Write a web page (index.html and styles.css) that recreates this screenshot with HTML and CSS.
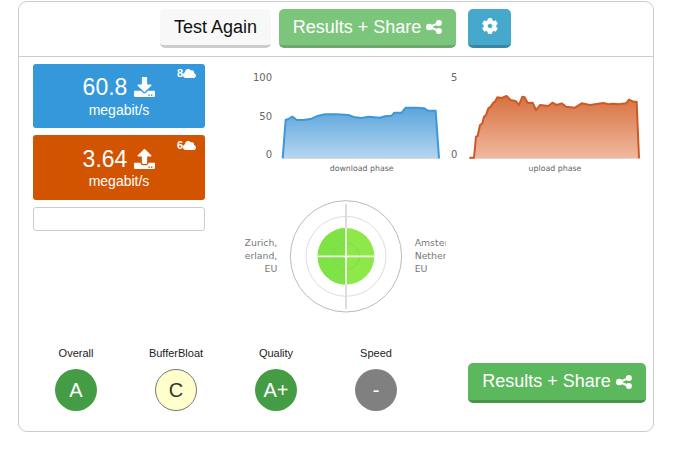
FILE: index.html
```html
<!DOCTYPE html>
<html lang="en">
<head>
<meta charset="utf-8">
<title>Speed test results</title>
<link rel="stylesheet" href="styles.css">
</head>
<body>
<svg class="defs" width="0" height="0" aria-hidden="true">
  <defs>
    <symbol id="i-share" viewBox="0 0 16 14"><circle cx="3.3" cy="7" r="3.3"/><circle cx="12.9" cy="3" r="3"/><circle cx="12.9" cy="11" r="3"/><path class="share-links" d="M12.9 3L3.3 7L12.9 11"/></symbol>
    <symbol id="i-cloud" viewBox="0 0 640 512"><path d="M537.6 226.6c4.1-10.7 6.4-22.4 6.4-34.6 0-53-43-96-96-96-19.7 0-38.1 6-53.3 16.2C367 64.2 315.3 32 256 32c-88.4 0-160 71.6-160 160 0 2.7.1 5.4.2 8.1C40.2 219.8 0 273.2 0 336c0 79.5 64.5 144 144 144h368c70.7 0 128-57.3 128-128 0-61.9-44-113.6-102.4-125.4z"/></symbol>
    <linearGradient id="g-down" x1="0" y1="0" x2="0" y2="1"><stop offset="0" stop-color="#5aa5dc"/><stop offset="1" stop-color="#b5d6ef"/></linearGradient>
    <linearGradient id="g-up" x1="0" y1="0" x2="0" y2="1"><stop offset="0" stop-color="#d8713f"/><stop offset="1" stop-color="#f0b9a0"/></linearGradient>
    <clipPath id="clip-left"><rect x="15" y="0" width="105" height="390"/></clipPath>
    <clipPath id="clip-right"><rect x="520" y="0" width="97" height="390"/></clipPath>
  </defs>
</svg>
<main class="panel">
  <header class="toolbar">
    <button class="btn btn-light">Test Again</button>
    <button class="btn btn-green btn-faded">Results + Share <svg class="ico-share"><use href="#i-share"/></svg></button>
    <button class="btn btn-gear" aria-label="Settings">
      <svg class="ico-cog" viewBox="0 0 512 512"><path d="M487.4 315.7l-42.6-24.6c4.3-23.2 4.3-47 0-70.2l42.6-24.6c4.9-2.8 7.1-8.6 5.5-14-11.1-35.6-30-67.8-54.7-94.6-3.8-4.1-10-5.1-14.8-2.3L380.8 110c-17.9-15.4-38.5-27.3-60.8-35.1V25.8c0-5.6-3.9-10.5-9.4-11.7-36.7-8.2-74.3-7.8-109.2 0-5.5 1.2-9.4 6.1-9.4 11.7V75c-22.2 7.9-42.8 19.8-60.8 35.1L88.7 85.5c-4.9-2.8-11-1.9-14.8 2.3-24.7 26.7-43.6 58.9-54.7 94.6-1.7 5.4.6 11.2 5.5 14L67.3 221c-4.3 23.2-4.3 47 0 70.2l-42.6 24.6c-4.9 2.8-7.1 8.6-5.5 14 11.1 35.6 30 67.8 54.7 94.6 3.8 4.1 10 5.1 14.8 2.3l42.6-24.6c17.9 15.4 38.5 27.3 60.8 35.1v49.2c0 5.6 3.9 10.5 9.4 11.7 36.7 8.2 74.3 7.8 109.2 0 5.5-1.2 9.4-6.1 9.4-11.7v-49.2c22.2-7.9 42.8-19.8 60.8-35.1l42.6 24.6c4.9 2.8 11 1.9 14.8-2.3 24.7-26.7 43.6-58.9 54.7-94.6 1.5-5.5-.7-11.3-5.6-14.1zM256 336c-44.1 0-80-35.9-80-80s35.9-80 80-80 80 35.9 80 80-35.9 80-80 80z"/></svg>
    </button>
  </header>

  <section class="main-row">
    <div class="tiles">
      <div class="tile tile-down">
        <span class="streams">8<svg class="ico-cloud"><use href="#i-cloud"/></svg></span>
        <div class="tile-value">60.8
          <svg class="ico-transfer" viewBox="0 0 512 512" preserveAspectRatio="none"><path d="M216 0h80c13.3 0 24 10.7 24 24v168h87.7c17.8 0 26.7 21.5 14.1 34.1L269.7 378.3c-7.5 7.5-19.8 7.5-27.3 0L90.1 226.1c-12.6-12.6-3.7-34.1 14.1-34.1H192V24c0-13.3 10.7-24 24-24zm296 376v112c0 13.3-10.7 24-24 24H24c-13.3 0-24-10.7-24-24V376c0-13.3 10.7-24 24-24h146.7l49 49c20.1 20.1 52.5 20.1 72.6 0l49-49H488c13.3 0 24 10.7 24 24zm-124 88c0-11-9-20-20-20s-20 9-20 20 9 20 20 20 20-9 20-20zm64 0c0-11-9-20-20-20s-20 9-20 20 9 20 20 20 20-9 20-20z"/></svg>
        </div>
        <div class="tile-unit">megabit/s</div>
      </div>
      <div class="tile tile-up">
        <span class="streams">6<svg class="ico-cloud"><use href="#i-cloud"/></svg></span>
        <div class="tile-value">3.64
          <svg class="ico-transfer" viewBox="0 0 512 512" preserveAspectRatio="none"><path d="M296 384h-80c-13.3 0-24-10.7-24-24V192h-87.7c-17.8 0-26.7-21.5-14.1-34.1L242.3 5.7c7.5-7.5 19.8-7.5 27.3 0l152.2 152.2c12.6 12.6 3.7 34.1-14.1 34.1H320v168c0 13.3-10.7 24-24 24zm216-8v112c0 13.3-10.7 24-24 24H24c-13.3 0-24-10.7-24-24V376c0-13.3 10.7-24 24-24h136v8c0 30.9 25.1 56 56 56h80c30.9 0 56-25.1 56-56v-8h136c13.3 0 24 10.7 24 24zm-124 88c0-11-9-20-20-20s-20 9-20 20 9 20 20 20 20-9 20-20zm64 0c0-11-9-20-20-20s-20 9-20 20 9 20 20 20 20-9 20-20z"/></svg>
        </div>
        <div class="tile-unit">megabit/s</div>
      </div>
      <div class="empty-box"></div>
    </div>

    <div class="charts">
      <div class="chart-row">
        <svg class="chart chart-down" viewBox="0 0 630 375">
          <line class="baseline" x1="128" y1="295" x2="602" y2="295"/>
          <path class="area-down" d="M128 295L137 180L145 177L157 170L170 180L190 180L215 176L235 167L255 163L290 163L325 165L345 172L365 174L385 170L420 173L435 169L455 167L463 158L485 158L497 143L530 143L553 145L563 152L587 152L597 295Z"/>
          <path class="line-down" d="M128 295L137 180L145 177L157 170L170 180L190 180L215 176L235 167L255 163L290 163L325 165L345 172L365 174L385 170L420 173L435 169L455 167L463 158L485 158L497 143L530 143L553 145L563 152L587 152L597 295"/>
          <text class="axis" x="96" y="63">100</text>
          <text class="axis" x="96" y="181">50</text>
          <text class="axis" x="96" y="294">0</text>
          <text class="phase" x="365" y="333">download phase</text>
        </svg>
        <svg class="chart chart-up" viewBox="30 0 600 375">
          <line class="baseline" x1="88" y1="295" x2="602" y2="295"/>
          <path class="area-up" d="M102 295L108 230L113 228L120 195L127 190L132 170L138 165L145 145L152 140L160 128L165 125L172 112L185 114L200 108L212 120L228 124L237 135L247 110L254 112L263 129L278 128L288 150L300 135L325 138L337 128L350 135L365 130L378 140L405 143L425 130L450 135L490 129L505 133L520 131L535 133L558 130L567 119L580 125L590 125L597 295Z"/>
          <path class="line-up" d="M88 293L102 293L108 230L113 228L120 195L127 190L132 170L138 165L145 145L152 140L160 128L165 125L172 112L185 114L200 108L212 120L228 124L237 135L247 110L254 112L263 129L278 128L288 150L300 135L325 138L337 128L350 135L365 130L378 140L405 143L425 130L450 135L490 129L505 133L520 131L535 133L558 130L567 119L580 125L590 125L597 295"/>
          <text class="axis" x="52" y="63">5</text>
          <text class="axis" x="52" y="294">0</text>
          <text class="phase" x="345" y="333">upload phase</text>
        </svg>
      </div>
      <svg class="radar" viewBox="0 0 645 390">
        <circle class="ring-outer" cx="318" cy="199" r="167"/>
        <circle class="ring" cx="318" cy="199" r="120"/>
        <circle class="disk" cx="318" cy="199" r="85"/>
        <path class="disk-half" d="M318 114A85 85 0 0 0 318 284Z"/>
        <circle class="ring-inner" cx="318" cy="199" r="40"/>
        <line class="cross-v" x1="318" y1="42" x2="318" y2="356"/>
        <line class="cross-h" x1="232" y1="199" x2="402" y2="199"/>
        <line class="cross-h" x1="318" y1="114" x2="318" y2="284"/>
        <g clip-path="url(#clip-left)">
          <text class="place end" x="112" y="167">Zurich,</text>
          <text class="place end" x="112" y="207">Switzerland,</text>
          <text class="place end" x="112" y="245">EU</text>
        </g>
        <g clip-path="url(#clip-right)">
          <text class="place" x="524" y="167">Amsterdam,</text>
          <text class="place" x="524" y="207">Netherlands,</text>
          <text class="place" x="524" y="245">EU</text>
        </g>
      </svg>
    </div>
  </section>

  <section class="bottom-row">
    <div class="grades">
      <div class="grade"><div class="grade-label">Overall</div><div class="badge badge-good">A</div></div>
      <div class="grade"><div class="grade-label">BufferBloat</div><div class="badge badge-mid">C</div></div>
      <div class="grade"><div class="grade-label">Quality</div><div class="badge badge-good">A+</div></div>
      <div class="grade"><div class="grade-label">Speed</div><div class="badge badge-none">-</div></div>
    </div>
    <button class="btn btn-green btn-wide">Results + Share <svg class="ico-share"><use href="#i-share"/></svg></button>
  </section>
</main>
</body>
</html>
```
FILE: styles.css
```css
* { box-sizing: border-box; }
html, body { margin: 0; padding: 0; background: #fff; }
body { font-family: "Liberation Sans", Arial, sans-serif; color: #222; overflow: hidden; }
.defs { position: absolute; }

.panel {
  width: 636px;
  height: 431px;
  margin: 1px 0 0 18px;
  border: 1px solid #ccc;
  border-radius: 9px;
}

.toolbar {
  height: 55px;
  padding: 7px 1px 0 0;
  display: flex;
  justify-content: center;
  align-items: flex-start;
  border-bottom: 1px solid #ccc;
}

.btn {
  height: 39px;
  padding: 0;
  border: 0;
  border-bottom: 3px solid transparent;
  border-radius: 5px;
  font: 18px "Liberation Sans", Arial, sans-serif;
  display: flex;
  align-items: center;
  justify-content: center;
  gap: 5px;
}
.btn-light { width: 111px; background: #f8f8f8; color: #111; border-bottom-color: #ccc; margin-right: 8px; }
.btn-green { background: #5cb85c; color: #fff; border-bottom-color: #4a934a; }
.btn-faded { width: 177px; opacity: .8; margin-right: 12px; }
.btn-wide { width: 178px; height: 40px; margin-top: 17px; }
.btn-gear { width: 43px; background: #46a9cb; border-bottom-color: #3a87a3; }
.ico-share { width: 16px; height: 14px; fill: #fff; }
.share-links { fill: none; stroke: #fff; stroke-width: 2; }
.ico-cog { width: 16px; height: 16px; fill: #fff; stroke: #fff; stroke-width: 18; margin-top: -2px; }

.main-row { display: flex; }
.tiles {
  width: 172px;
  margin-left: 14px;
  padding-top: 7px;
  display: flex;
  flex-direction: column;
  gap: 7px;
}
.tile {
  position: relative;
  height: 64px;
  border-radius: 3px;
  color: #fff;
  text-align: center;
  padding-top: 9px;
}
.tile-down { background: #3498db; }
.tile-up { background: #d35400; height: 65px; padding-top: 10px; }
.tile-value {
  font-size: 23px;
  line-height: 28px;
  display: flex;
  justify-content: center;
  align-items: center;
  gap: 7px;
}
.ico-transfer { width: 21px; height: 20px; fill: #fff; }
.tile-unit { font-size: 14px; line-height: 17px; margin-top: 1px; }
.tile-up .tile-unit { margin-top: 0; }
.streams {
  position: absolute;
  top: 3px;
  right: 9px;
  font-size: 11px;
  font-weight: bold;
  line-height: 13px;
  display: flex;
  align-items: center;
}
.tile-up .streams { top: 4px; }
.ico-cloud { width: 13px; height: 11px; fill: #fff; }
.empty-box { height: 24px; border: 1px solid #ccc; border-radius: 3px; }

.charts { margin-left: 35px; padding-top: 3px; }
.chart-row { display: flex; }
.chart { display: block; height: 125px; }
.chart-down { width: 210px; }
.chart-up { width: 200px; }
.radar { display: block; width: 215px; height: 130px; margin-top: 5px; }

.baseline { stroke: #d8d8d8; stroke-width: 3; }
.area-down { fill: url(#g-down); }
.line-down { fill: none; stroke: #3f97d8; stroke-width: 6; stroke-linejoin: round; }
.area-up { fill: url(#g-up); }
.line-up { fill: none; stroke: #cc5a26; stroke-width: 6; stroke-linejoin: round; }
.axis { font: 30px "DejaVu Sans", sans-serif; fill: #666; text-anchor: end; }
.phase { font: 23.5px "DejaVu Sans", sans-serif; fill: #666; text-anchor: middle; }

.ring-outer { fill: none; stroke: #bbb; stroke-width: 3; }
.ring { fill: none; stroke: #ddd; stroke-width: 3; }
.ring-inner { fill: none; stroke: #80dc48; stroke-width: 3; }
.disk { fill: #8ee84a; }
.disk-half { fill: #7fe245; }
.cross-v { stroke: #ddd; stroke-width: 6; }
.cross-h { stroke: #eefae6; stroke-width: 5; }
.place { font: 28px "DejaVu Sans", sans-serif; fill: #777; }
.end { text-anchor: end; }

.bottom-row {
  margin-top: 26px;
  padding: 0 7px 0 7px;
  display: flex;
  justify-content: space-between;
  align-items: flex-start;
}
.grades { display: flex; }
.grade { width: 100px; display: flex; flex-direction: column; align-items: center; }
.grade-label { font-size: 11px; line-height: 14px; color: #222; margin-bottom: 9px; }
.badge {
  width: 42px;
  height: 42px;
  border-radius: 50%;
  font-size: 20px;
  display: flex;
  align-items: center;
  justify-content: center;
}
.badge-good { background: #449d44; color: #fff; }
.badge-mid { background: #ffffcc; color: #333; border: 1px solid #777; }
.badge-none { background: #808080; color: #fff; }
```
